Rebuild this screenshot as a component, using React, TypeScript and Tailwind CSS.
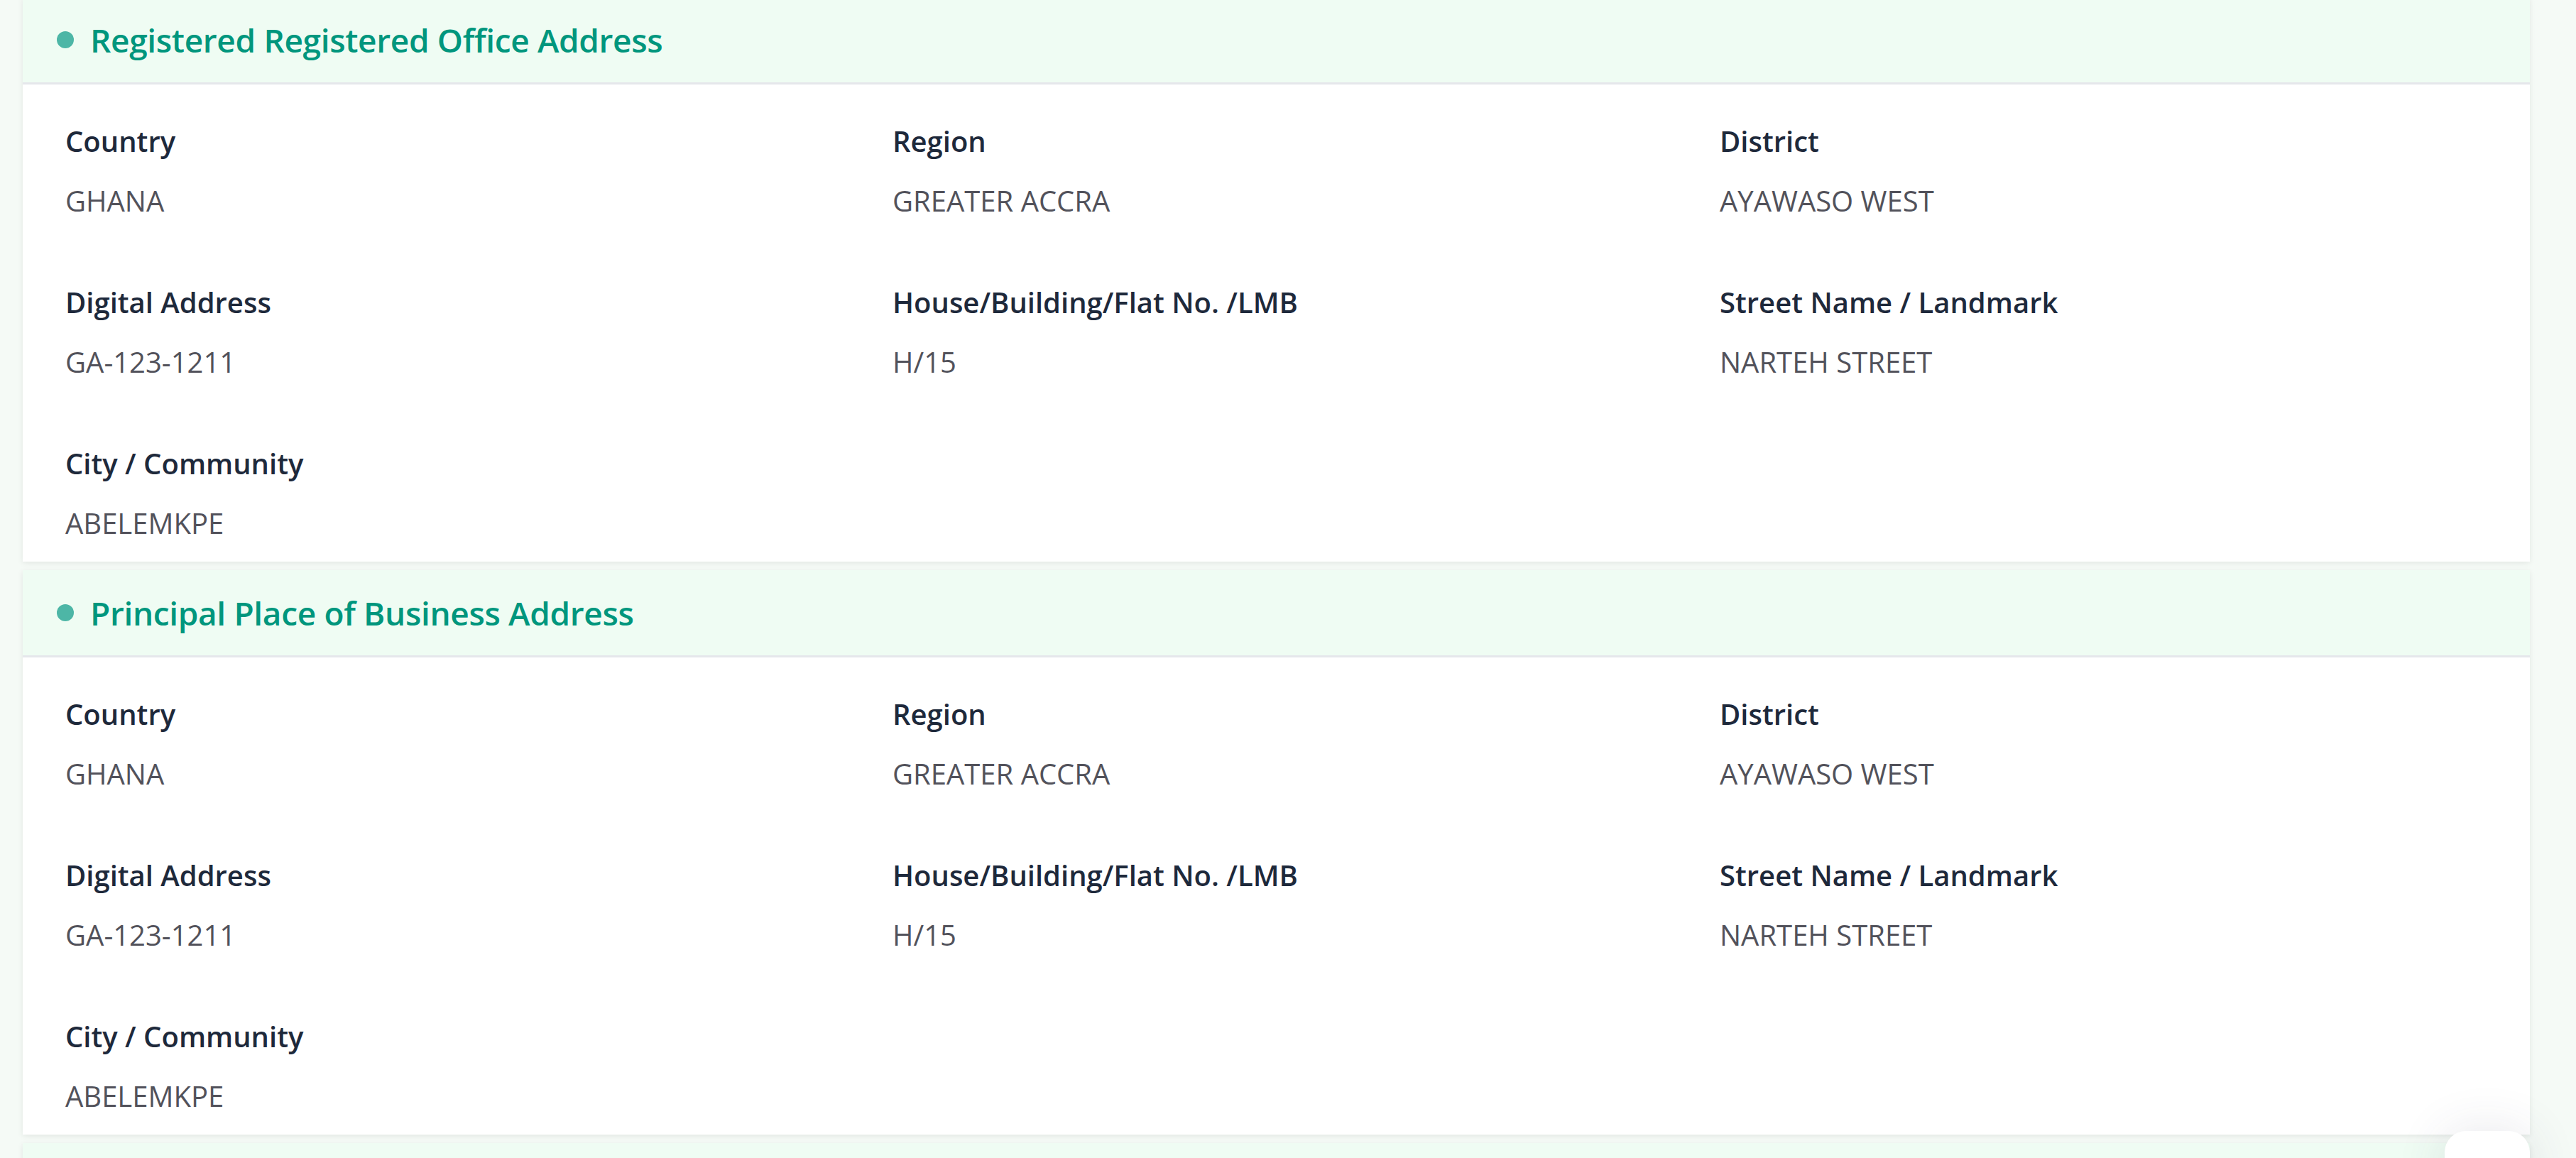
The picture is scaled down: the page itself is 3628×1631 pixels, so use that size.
import React from "react";

type Field = {
    label: string;
    value: string;
};

const addressFields: Field[] = [
    { label: "Country", value: "GHANA" },
    { label: "Region", value: "GREATER ACCRA" },
    { label: "District", value: "AYAWASO WEST" },
    { label: "Digital Address", value: "GA-123-1211" },
    { label: "House/Building/Flat No. /LMB", value: "H/15" },
    { label: "Street Name / Landmark", value: "NARTEH STREET" },
    { label: "City / Community", value: "ABELEMKPE" },
];

const font = { fontFamily: '"Open Sans", "Noto Sans", Arial, sans-serif' };

function SectionHeader({ title }: { title?: string }) {
    return (
        <div className="h-[123px] flex items-center gap-[23px] pl-[48px] bg-[#effcf3] border-b-[3px] border-[#e5e7eb]">
            {title && <span className="w-[24px] h-[24px] rounded-full bg-[#4db6a6] shrink-0" />}
            {title && (
                <h2 className="text-[46px] leading-none font-semibold text-[#00967d] tracking-[-0.35px]">
                    {title}
                </h2>
            )}
        </div>
    );
}

function AddressCard({ title, data }: { title: string; data: Field[] }) {
    return (
        <section className="bg-white shadow-[0_2px_8px_rgba(0,0,0,0.08)]">
            <SectionHeader title={title} />

            {/* fields */}
            <div className="grid grid-cols-3 gap-x-[84px] gap-y-[83px] px-[60px] pt-[50px] pb-[24px]">
                {data.map((item, key) => (
                    <div key={key}>
                        <div className="text-[40px] leading-[60px] font-semibold text-[#1e293b] mb-[24px]">
                            {item.label}
                        </div>
                        <div className="text-[40px] leading-[60px] font-normal text-[#52525b]">
                            {item.value}
                        </div>
                    </div>
                ))}
            </div>
        </section>
    );
}

export default function App() {
    return (
        <div className="h-[1631px] overflow-hidden bg-[#f5faf6]" style={font}>
            <div className="flex flex-col gap-[12px] pl-[32px] pr-[65px] -mt-[4px]">
                <AddressCard title="Registered Registered Office Address" data={addressFields} />
                <AddressCard title="Principal Place of Business Address" data={addressFields} />
                <section className="bg-white shadow-[0_2px_8px_rgba(0,0,0,0.08)]">
                    <SectionHeader />
                </section>
            </div>

            {/* floating action button, cut off by the window */}
            <div className="fixed right-[65px] top-[1593px] w-[120px] h-[120px] rounded-[30px] bg-white shadow-[0_0_70px_rgba(60,60,90,0.12)]" />
        </div>
    );
}
